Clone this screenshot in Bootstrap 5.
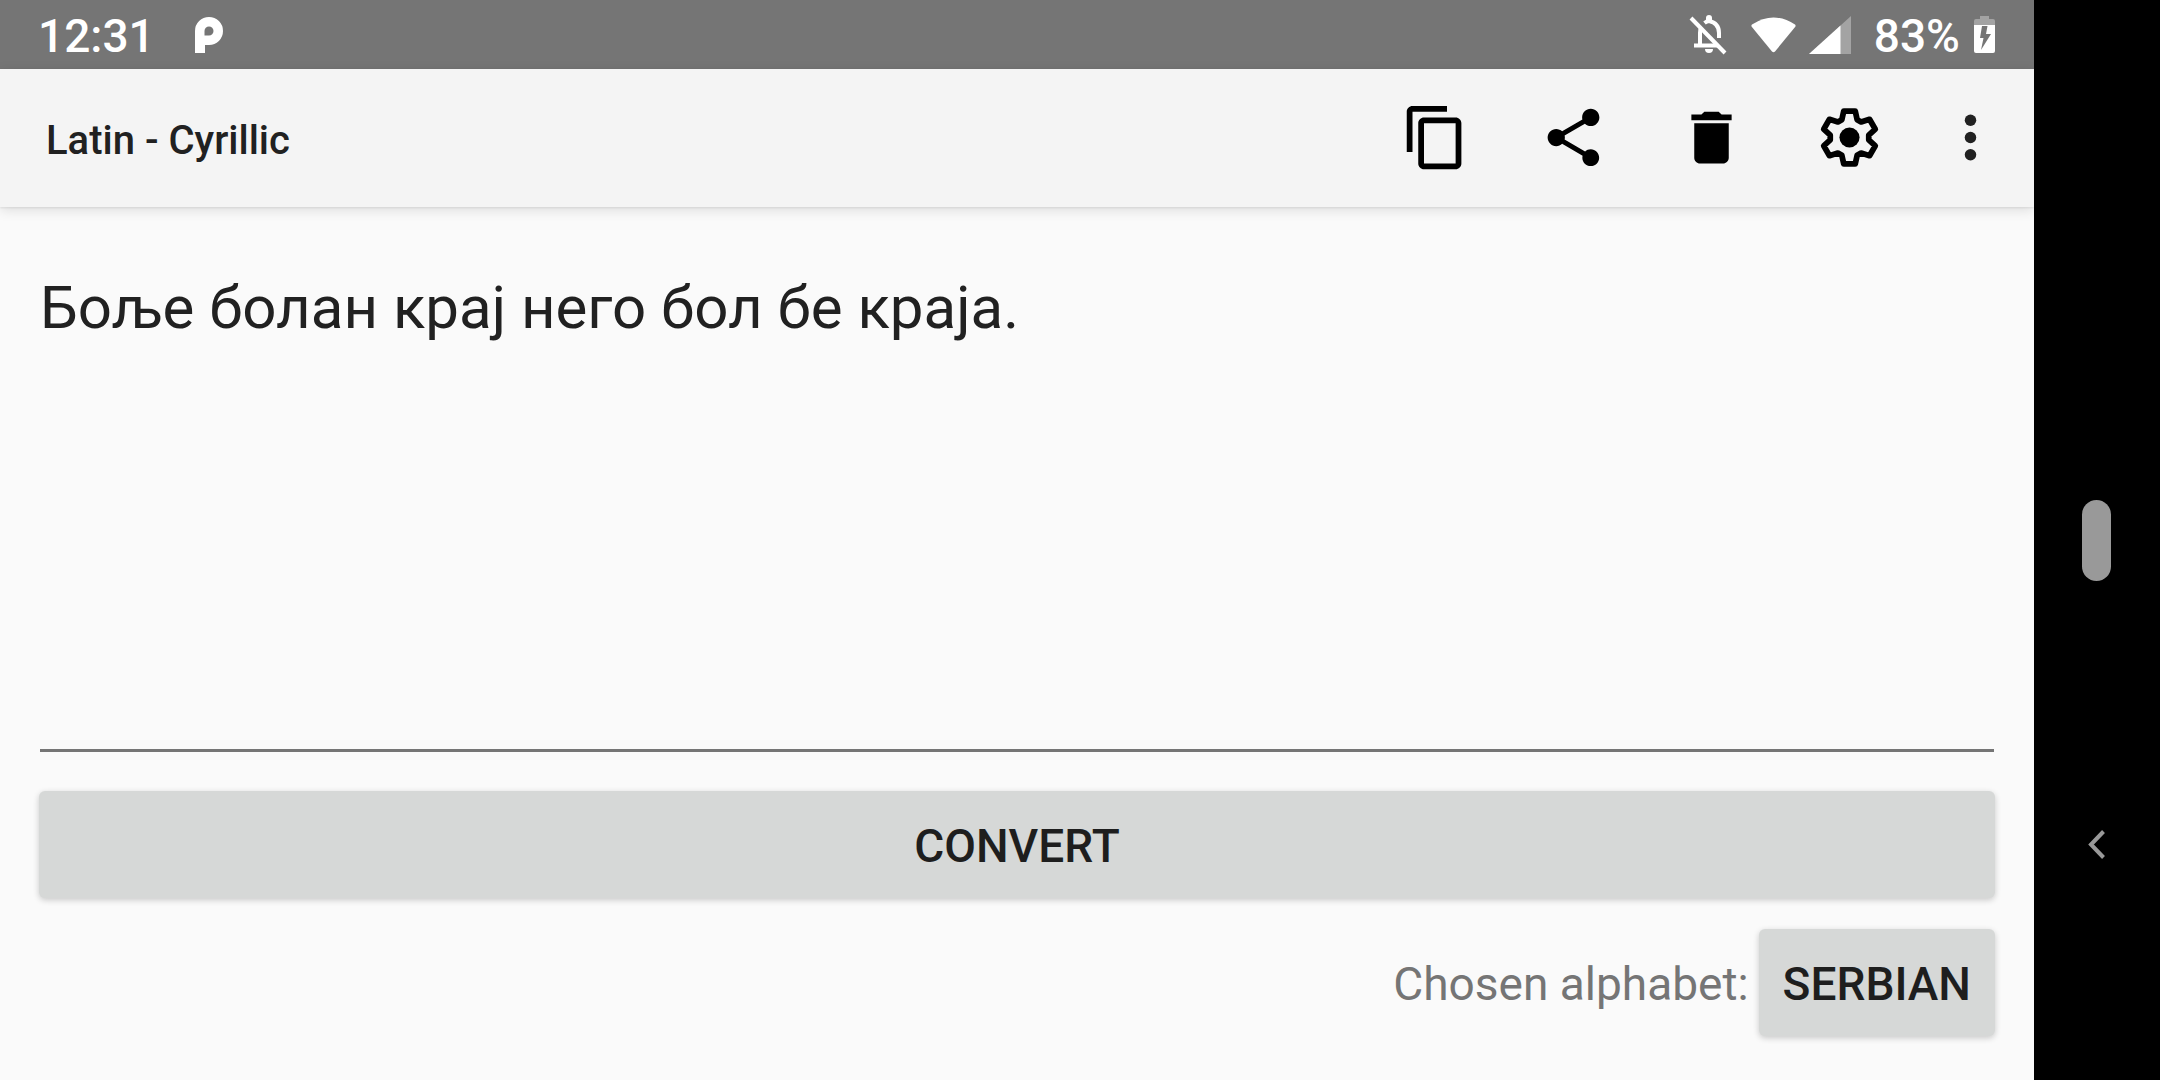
<!DOCTYPE html>
<html lang="en">
<head>
<meta charset="utf-8">
<meta name="viewport" content="width=device-width, initial-scale=1">
<title>Latin - Cyrillic</title>
<link href="https://cdn.jsdelivr.net/npm/bootstrap@5.3.0/dist/css/bootstrap.min.css" rel="stylesheet">
<style>
  body { font-family: Roboto, "Noto Sans", sans-serif; background: #fafafa; color: #212121; }
  .status-bar { height: 69px; background: #757575; color: #fff; font-size: 46px; font-weight: 500; line-height: 56px; padding: 0 39px 0 38px; }
  .status-bar span { padding-top: 3px; }
  .status-bar svg, .app-bar svg, .system-nav svg { display: block; flex: none; }
  .notice { margin-left: 40px; }
  .wifi { margin-left: 24px; }
  .signal { margin-left: 13px; }
  .charge { margin-left: 23px; }
  .battery { margin-left: 14px; }
  .app-bar { height: 138px; background: #f4f4f4; padding: 0 29px 2px 46px; box-shadow: 0 1px 2px rgba(0,0,0,.08), 0 3px 12px rgba(0,0,0,.12); }
  .app-title { font-size: 40px; font-weight: 500; line-height: 48px; padding-top: 8px; }
  .tools { gap: 69px; }
  .tools .overflow { margin-left: -17px; }
  .tools .btn { color: #000; }
  .work-area { padding: 40px 39px 44px; gap: 31px; }
  .editor { font-size: 60px; line-height: 72px; color: #212121; background: transparent; border-bottom: 3px solid #757575; padding: 25px 0; resize: none; overflow: hidden; }
  .editor:focus { background: transparent; box-shadow: none; border-color: #757575; color: #212121; }
  .editor-wrap { padding: 0 1px 8px; }
  .btn-raised { height: 107px; padding: 2px 24px 0; font-size: 46px; font-weight: 500; line-height: 56px; text-transform: uppercase; color: #1e1e1e; background: #d6d8d7; border: 0; border-radius: 6px; box-shadow: 0 2px 6px rgba(0,0,0,.2); }
  .btn-raised:hover { background: #cbcdcc; color: #1e1e1e; }
  .choice { gap: 10px; font-size: 46px; line-height: 56px; color: #757575; }
  .choice label { padding-top: 2px; }
  .system-nav { width: 126px; background: #000; display: grid; grid-template-rows: 1fr auto 1fr; justify-items: center; padding-right: 2px; }
  .home-pill { grid-row: 2; width: 29px; height: 81px; background: #999; }
  .back { grid-row: 3; align-self: start; margin-top: 201px; height: 126px; width: 100%; }
</style>
<script src="https://cdn.jsdelivr.net/npm/bootstrap@5.3.0/dist/js/bootstrap.bundle.min.js" defer></script>
</head>
<body>
<div class="d-flex min-vh-100">
  <div class="d-flex flex-column flex-grow-1">
    <div class="status-bar d-flex align-items-center">
      <span>12:31</span>
      <svg class="notice" width="28" height="36" viewBox="0 0 28 36" aria-hidden="true"><path fill="#fff" fill-rule="evenodd" d="M0 36V14A14 14 0 1 1 14 28H10V36ZM9.500 18.500V14A4.500 4.500 0 1 1 14 18.500Z"/></svg>
      <div class="d-flex align-items-center ms-auto">
        <svg width="38" height="40" viewBox="0 0 38 40" fill="none" stroke="#fff" stroke-width="4" aria-hidden="true"><path d="M2 3L36 38"/><path d="M5 30.500H29M11 30V18Q11 14 12.500 12M15.500 8Q18 6 20 6Q30 8 30 18V23"/><path fill="#fff" stroke="none" d="M17 6V3a3 3 0 0 1 6 0v3ZM16 34h8a4 4 0 0 1-8 0Z"/></svg>
        <svg class="wifi" width="45" height="36" viewBox="0 0 45 36" aria-hidden="true"><path fill="#fff" d="M1 7.500Q22.500-6.500 44 7.500Q45 8.500 44.300 9.700L24 34.500Q22.500 36 21 34.500L.7 9.700Q0 8.500 1 7.500Z"/></svg>
        <svg class="signal" width="42" height="38" viewBox="0 0 42 38" aria-hidden="true"><path fill="#a3a3a3" d="M42 0V38H0Z"/><path fill="#fff" d="M31.500 9.500V38H0Z"/></svg>
        <span class="charge">83%</span>
        <svg class="battery" width="21" height="37" viewBox="0 0 21 37" aria-hidden="true"><path fill="#a3a3a3" d="M6 0h9v3h4q2 0 2 2v5H0V5q0-2 2-2h4Z"/><path fill="#fff" d="M0 9H21V35q0 2-2 2H2q-2 0-2-2Z"/><path fill="#757575" d="M8 10H13.500L12 18H17L7 34L9.500 22H6Z"/></svg>
      </div>
    </div>

    <header class="app-bar d-flex align-items-center justify-content-between">
      <h1 class="app-title mb-0">Latin - Cyrillic</h1>
      <div class="tools d-flex align-items-center">
        <button type="button" class="btn border-0 p-0" aria-label="Copy"><svg width="69" height="69" viewBox="0 0 24 24" fill="currentColor"><path d="M16 1H4c-1.100 0-2 .9-2 2v14h2V3h12V1zm3 4H8c-1.100 0-2 .9-2 2v14c0 1.100.9 2 2 2h11c1.100 0 2-.9 2-2V7c0-1.100-.9-2-2-2zm0 16H8V7h11v14z"/></svg></button>
        <button type="button" class="btn border-0 p-0" aria-label="Share"><svg width="69" height="69" viewBox="0 0 24 24" fill="currentColor"><path d="M18 16.080c-.76 0-1.440.3-1.960.77L8.910 12.700c.05-.23.09-.46.09-.7s-.04-.47-.09-.7l7.050-4.110c.54.5 1.250.81 2.040.81 1.660 0 3-1.340 3-3s-1.340-3-3-3-3 1.340-3 3c0 .24.04.47.09.7L8.040 9.810C7.500 9.310 6.790 9 6 9c-1.660 0-3 1.340-3 3s1.340 3 3 3c.79 0 1.500-.31 2.040-.81l7.120 4.160c-.05.21-.08.43-.08.65 0 1.610 1.310 2.920 2.920 2.920s2.920-1.310 2.920-2.920-1.310-2.920-2.920-2.920z"/></svg></button>
        <button type="button" class="btn border-0 p-0" aria-label="Delete"><svg width="69" height="69" viewBox="0 0 24 24" fill="currentColor"><path d="M6 19c0 1.100.9 2 2 2h8c1.100 0 2-.9 2-2V7H6v12zM19 4h-3.500l-1-1h-5l-1 1H5v2h14V4z"/></svg></button>
        <button type="button" class="btn border-0 p-0" aria-label="Settings"><svg width="69" height="69" viewBox="-12 -12 24 24"><path fill="none" stroke="currentColor" stroke-width="2" stroke-linejoin="round" d="M-2-9.200H2L2.660-6.200L4.040-5.400L6.970-6.330L8.970-2.870L6.700-.8V.8L8.970 2.870L6.970 6.330L4.040 5.400L2.660 6.200L2 9.200H-2L-2.660 6.200L-4.040 5.400L-6.970 6.330L-8.970 2.870L-6.700 .8V-.8L-8.970-2.870L-6.970-6.330L-4.040-5.400L-2.660-6.200Z"/><circle r="3.500" fill="currentColor"/></svg></button>
        <button type="button" class="btn border-0 p-0 overflow" aria-label="More options"><svg width="69" height="69" viewBox="0 0 24 24" fill="#212121"><circle cx="12" cy="6" r="2"/><circle cx="12" cy="12" r="2"/><circle cx="12" cy="18" r="2"/></svg></button>
      </div>
    </header>

    <main class="work-area d-flex flex-column flex-grow-1">
      <div class="editor-wrap d-flex flex-grow-1">
        <textarea class="editor form-control border-top-0 border-start-0 border-end-0 rounded-0" aria-label="Text to convert" spellcheck="false">Боље болан крај него бол бе краја.</textarea>
      </div>
      <button type="button" class="btn btn-raised w-100">Convert</button>
      <div class="choice d-flex align-items-center justify-content-end">
        <label for="alphabet">Chosen alphabet:</label>
        <button type="button" id="alphabet" class="btn btn-raised">Serbian</button>
      </div>
    </main>
  </div>

  <nav class="system-nav flex-shrink-0" aria-label="System">
    <button type="button" class="btn home-pill border-0 p-0 rounded-pill" aria-label="Home"></button>
    <button type="button" class="btn back border-0 p-0 d-flex align-items-center justify-content-center" aria-label="Back"><svg width="17" height="29" viewBox="0 0 17 29"><path d="M15.500 1.500L3 14.500L15.500 27.500" fill="none" stroke="#999" stroke-width="4"/></svg></button>
  </nav>
</div>
</body>
</html>
